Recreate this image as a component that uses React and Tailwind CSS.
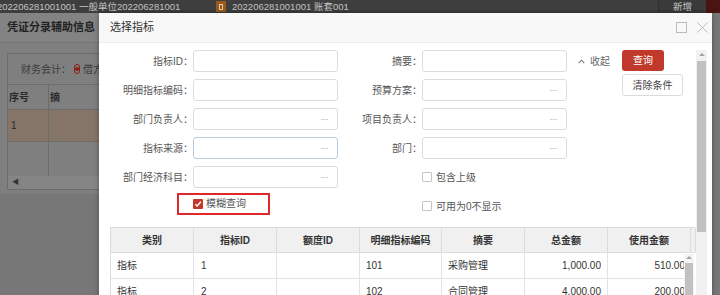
import React from "react";

const Dots = () => (
  <span className="text-[#9a9a9a] text-[9px] leading-none tracking-[-0.5px]">···</span>
);

function Input({ dots, focus }) {
  return (
    <div
      className={
        focus
          ? "w-[145px] h-[22px] rounded-[3px] border border-[#b9cbe0] bg-white flex items-center justify-end pr-[9px]"
          : "w-[145px] h-[22px] rounded-[3px] border border-[#dcdcdc] bg-white flex items-center justify-end pr-[9px]"
      }
    >
      {dots && <Dots />}
    </div>
  );
}

function Label({ w, children }) {
  return (
    <div className={w === 1 ? "w-[94px] text-right text-[#555] whitespace-nowrap" : "w-[84px] text-right text-[#555] whitespace-nowrap"}>
      {children}
    </div>
  );
}

function Check({ checked }) {
  if (checked) {
    return (
      <span className="w-[10px] h-[10px] rounded-[1px] bg-[#c0392b] flex items-center justify-center">
        <svg width="8" height="8" viewBox="0 0 8 8">
          <path d="M1.3 4.2 L3.2 6 L6.8 1.8" stroke="#fff" strokeWidth="1.5" fill="none" />
        </svg>
      </span>
    );
  }
  return <span className="w-[10px] h-[10px] rounded-[1px] border border-[#c4c4c4] bg-white" />;
}

const rows = [
  ["指标", "1", "", "101", "采购管理", "1,000.00", "510.00"],
  ["指标", "2", "", "102", "合同管理", "4,000.00", "200.00"],
];

export default function App() {
  return (
    <div className="relative w-[720px] h-[295px] overflow-hidden bg-[#777777] font-['Liberation_Sans','Noto_Sans_CJK_SC',sans-serif] text-[10px]">
      {/* top bar */}
      <div className="flex h-[13px] items-center bg-[#3e3e3e] text-[#c4c4c4] text-[9.5px] leading-none whitespace-nowrap">
        <span className="-ml-[3px] w-[219px]">202206281001001 一般单位202206281001</span>
        <span className="w-[10px] h-[11px] bg-[#9a5a1e] flex items-center justify-center">
          <span className="w-[4px] h-[6px] border border-[#e6c9a8]" />
        </span>
        <span className="ml-[6px]">202206281001001 账套001</span>
        <div className="ml-auto flex h-full w-[48px] items-center justify-center border-l border-[#303030] bg-[#3a3a3a]">新增</div>
        <div className="w-[14px] h-full bg-[#4a1410]" />
      </div>

      {/* underlying page */}
      <div className="w-[100px]">
        <div className="h-[30px] bg-[#838383] flex items-center pl-[7px] text-[11px] text-[#222] font-semibold whitespace-nowrap border-b border-[#767676]">
          凭证分录辅助信息
        </div>
        <div className="bg-[#7f7f7f] pt-[10px] pl-[7px] pb-[4px]">
          <div className="border-l border-t border-b border-[#6c6c6c]">
            <div className="h-[30px] flex items-center pl-[13px] text-[#3a3a3a] whitespace-nowrap">
              财务会计：
              <span className="ml-[3px] w-[10px] h-[10px] rounded-full border border-[#8a1e14] flex items-center justify-center">
                <span className="w-[4px] h-[4px] rounded-full bg-[#8a1e14]" />
              </span>
              <span className="ml-[3px]">借方</span>
            </div>
            <div className="h-[25px] flex border-t border-[#6c6c6c] text-[#2a2a2a] font-semibold">
              <div className="w-[41px] flex items-center pl-[1px] border-r border-[#6c6c6c]">序号</div>
              <div className="flex-1 flex items-center pl-[1px]">摘</div>
            </div>
            <div className="h-[32px] flex bg-[#857468] border-t border-[#6c6c6c] text-[#2a2a2a]">
              <div className="w-[41px] flex items-center pl-[3px] border-r border-[#6c6c6c]">1</div>
              <div className="flex-1" />
            </div>
            <div className="h-[35px] flex border-t border-[#6c6c6c]">
              <div className="w-[41px] border-r border-[#6c6c6c]" />
              <div className="flex-1" />
            </div>
            <div className="h-[13px] bg-[#858585] flex items-center pl-[4px] text-[#333] text-[7px]">◀</div>
          </div>
        </div>
      </div>

      {/* modal */}
      <div className="absolute left-[99px] top-[13px] w-[613px] h-[290px] bg-white shadow-[0_0_5px_rgba(0,0,0,0.35)]">
        <div className="h-[30px] bg-[#f8f8f8] border-b border-[#ececec] flex items-center pl-[11px] text-[11px] text-[#333]">
          选择指标
          <div className="ml-auto flex items-center gap-[10px] pr-[4px]">
            <svg width="11" height="11" viewBox="0 0 11 11">
              <rect x="0.5" y="0.5" width="10" height="10" fill="none" stroke="#bbb" />
            </svg>
            <svg width="11" height="11" viewBox="0 0 11 11">
              <path d="M0.5 0.5 L10.5 10.5 M10.5 0.5 L0.5 10.5" stroke="#bbb" strokeWidth="1" />
            </svg>
          </div>
        </div>

        <div className="flex">
          <div className="w-[597px] pt-[7px]">
            <div className="flex items-start">
              <div className="w-[468px] flex flex-col gap-[7px]">
                <div className="flex items-center h-[22px]">
                  <Label w={1}>指标ID：</Label>
                  <Input />
                  <Label w={2}>摘要：</Label>
                  <Input />
                </div>
                <div className="flex items-center h-[22px]">
                  <Label w={1}>明细指标编码：</Label>
                  <Input />
                  <Label w={2}>预算方案：</Label>
                  <Input dots />
                </div>
                <div className="flex items-center h-[22px]">
                  <Label w={1}>部门负责人：</Label>
                  <Input dots />
                  <Label w={2}>项目负责人：</Label>
                  <Input dots />
                </div>
                <div className="flex items-center h-[22px]">
                  <Label w={1}>指标来源：</Label>
                  <Input dots focus />
                  <Label w={2}>部门：</Label>
                  <Input dots />
                </div>
                <div className="flex items-center h-[22px]">
                  <Label w={1}>部门经济科目：</Label>
                  <Input dots />
                  <div className="w-[84px]" />
                  <div className="flex items-center gap-[4px] text-[#555]">
                    <Check />
                    包含上级
                  </div>
                </div>
                <div className="flex items-center h-[22px]">
                  <div className="ml-[78px] w-[93px] h-[22px] -mt-[5px] border-2 border-[#e2272b] flex items-center pl-[14px] gap-[3px] text-[#555]">
                    <Check checked />
                    模糊查询
                  </div>
                  <div className="ml-[152px] flex items-center gap-[4px] text-[#555]">
                    <Check />
                    可用为0不显示
                  </div>
                </div>
              </div>
              <div className="ml-[11px] w-[44px] h-[22px] flex items-center gap-[5px] text-[#666]">
                <svg width="7" height="5" viewBox="0 0 7 5">
                  <path d="M0.7 4.2 L3.5 1.2 L6.3 4.2" stroke="#777" strokeWidth="1.1" fill="none" />
                </svg>
                收起
              </div>
              <div className="flex flex-col items-start gap-[3px]">
                <div className="w-[42px] h-[21px] rounded-[3px] bg-[#c1392b] text-white flex items-center justify-center">查询</div>
                <div className="w-[61px] h-[22px] rounded-[3px] border border-[#dcdcdc] bg-white text-[#444] flex items-center justify-center">清除条件</div>
              </div>
            </div>

            {/* table */}
            <div className="ml-[11px] mt-[10px] w-[585px] border-l border-t border-[#dcdcdc]">
              <div className="grid grid-cols-[83px_83px_83px_82px_83px_83px_83px_5px] h-[25px] bg-[#f0f0f0] border-b border-[#dcdcdc] font-bold text-[#333]">
                {["类别", "指标ID", "额度ID", "明细指标编码", "摘要", "总金额", "使用金额"].map((h) => (
                  <div key={h} className="flex items-center justify-center border-r border-[#dcdcdc]">{h}</div>
                ))}
                <div className="border-r border-[#dcdcdc]" />
              </div>
              <div className="relative">
                {rows.map((r, i) => (
                  <div key={i} className="grid grid-cols-[83px_83px_83px_82px_83px_83px_83px] h-[26px] border-b border-[#e3e3e3] text-[#333]">
                    <div className="flex items-center pl-[6px] border-r border-[#e3e3e3]">{r[0]}</div>
                    <div className="flex items-center pl-[7px] border-r border-[#e3e3e3]">{r[1]}</div>
                    <div className="flex items-center pl-[7px] border-r border-[#e3e3e3]">{r[2]}</div>
                    <div className="flex items-center pl-[6px] border-r border-[#e3e3e3]">{r[3]}</div>
                    <div className="flex items-center pl-[6px] border-r border-[#e3e3e3]">{r[4]}</div>
                    <div className="flex items-center justify-end pr-[6px] border-r border-[#e3e3e3]">{r[5]}</div>
                    <div className="flex items-center justify-end pr-[6px]">{r[6]}</div>
                  </div>
                ))}
                <div className="absolute right-[1px] top-[1px] w-[10px] h-[60px] bg-[#f4f4f4] flex flex-col items-center">
                  <span className="mt-[2px] w-0 h-0 border-l-[3px] border-r-[3px] border-b-[3px] border-l-transparent border-r-transparent border-b-[#a3a3a3]" />
                  <span className="mt-[4px] w-[8px] flex-1 bg-[#c1c1c1]" />
                </div>
              </div>
            </div>
          </div>

          {/* outer scrollbar */}
          <div className="mt-[7px] w-[11px] h-[260px] bg-[#f1f1f1] flex flex-col items-center">
            <span className="mt-[3px] w-0 h-0 border-l-[3px] border-r-[3px] border-b-[3px] border-l-transparent border-r-transparent border-b-[#a3a3a3]" />
            <span className="mt-[5px] w-[9px] h-[171px] bg-[#c1c1c1]" />
          </div>
        </div>
      </div>
    </div>
  );
}
